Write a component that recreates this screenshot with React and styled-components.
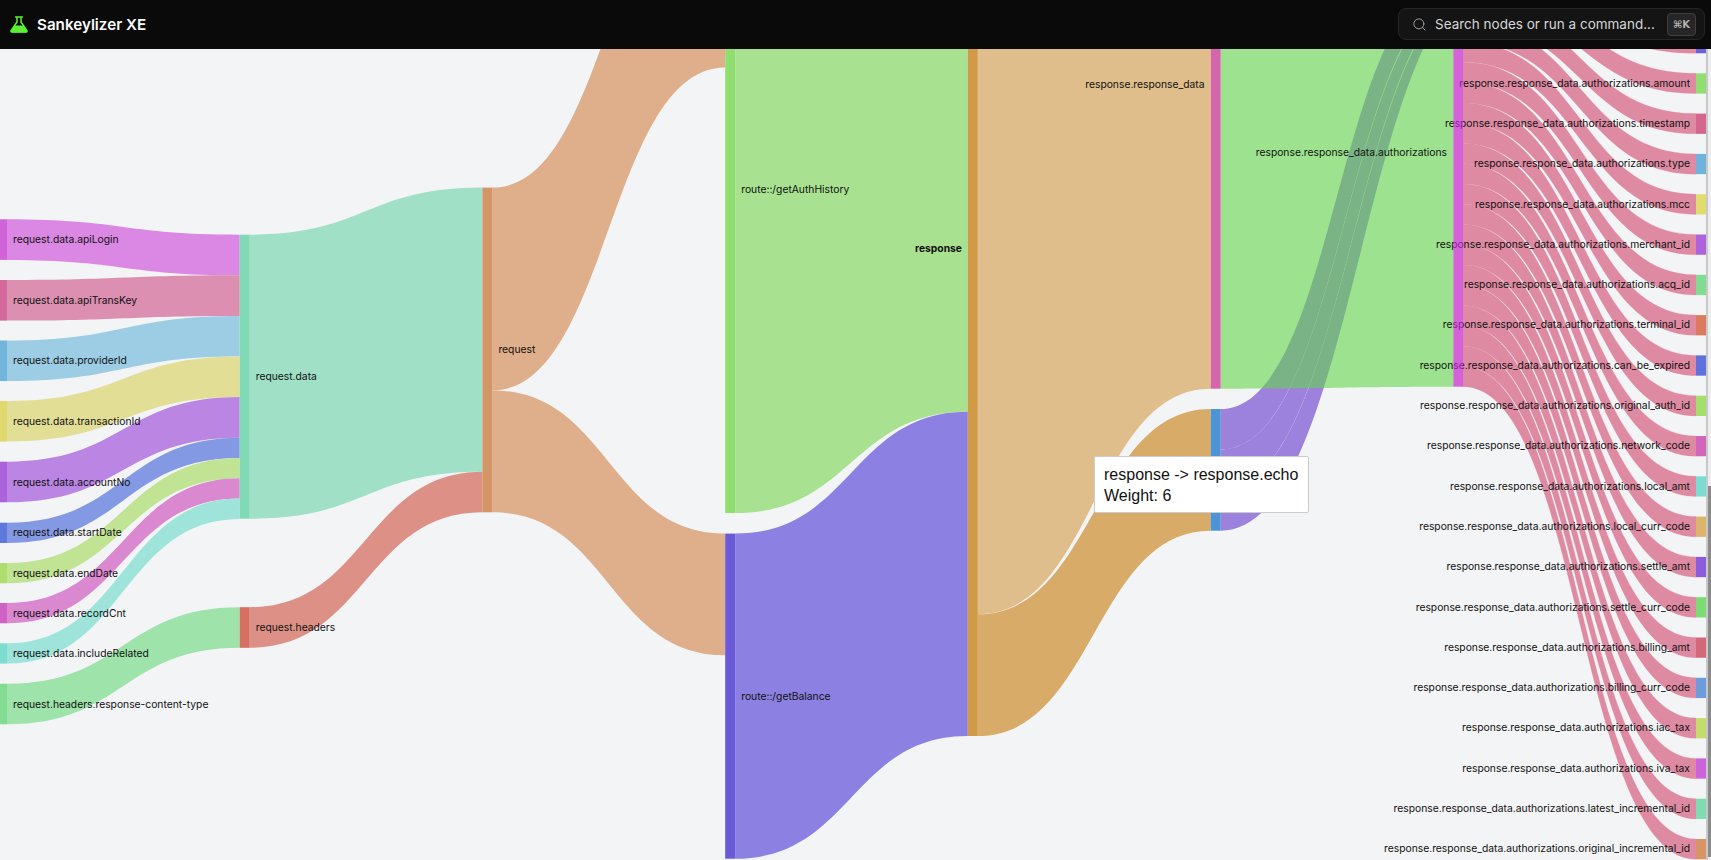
import React from 'react'
import styled, { createGlobalStyle } from 'styled-components'
import { Search } from 'lucide-react'

const GlobalStyle = createGlobalStyle`
html, body {
  margin: 0;
  padding: 0;
  height: 100%;
  overflow: hidden;
  background: #f3f4f6;
  font-family: Inter, "Liberation Sans", sans-serif;
}
`

const Page = styled.div`
display: flex;
flex-direction: column;
width: 100%;
height: 100vh;
`
const TopBar = styled.header`
display: flex;
align-items: center;
justify-content: space-between;
flex: 0 0 49px;
padding: 0 6px 1px 10px;
box-sizing: border-box;
background: #0a0a0a;
`
const Brand = styled.div`
display: flex;
align-items: center;
gap: 9px;
color: #fafafa;
font-size: 15.2px;
font-weight: 600;
`
const SearchBox = styled.div`
display: flex;
align-items: center;
width: 307px;
height: 32px;
padding: 0 8px 0 13px;
box-sizing: border-box;
background: #141414;
border: 1px solid #262626;
border-radius: 8px;
color: #d8d8d8;
font-size: 13.5px;
`
const SearchText = styled.span`
flex: 1;
margin-left: 8px;
white-space: nowrap;
`
const Kbd = styled.kbd`
display: flex;
align-items: center;
justify-content: center;
width: 27px;
height: 21px;
background: #262626;
border: 1px solid #404040;
border-radius: 4px;
color: #b0b0b0;
font-family: "DejaVu Sans", Inter, sans-serif;
font-size: 10px;
font-weight: 700;
`
const Body = styled.main`
display: flex;
flex: 1;
min-height: 0;
`
const Canvas = styled.div`
position: relative;
flex: 1;
overflow: hidden;
`
const Rail = styled.div`
position: relative;
flex: 0 0 5px;
background: linear-gradient(to right, #c8c8c8 0 2px, #ededed 2px);
`
const Thumb = styled.div`
position: absolute;
right: 0;
top: 437px;
bottom: 3px;
width: 3px;
background: #8a8a8a;
`
const Chart = styled.svg`
display: block;
width: 1706px;
height: 811px;
`
const Label = styled.text`
font-family: Inter, "Liberation Sans", sans-serif;
font-size: 10.3px;
font-weight: ${p => (p.$bold ? 700 : 400)};
fill: #111;
dominant-baseline: central;
`
const Tooltip = styled.div`
position: absolute;
left: 1094px;
top: 406.5px;
width: 215px;
height: 57px;
padding: 7px 9px;
box-sizing: border-box;
background: #fff;
border: 1px solid #ccc;
border-radius: 2px;
color: #111;
font-family: "Liberation Sans", Arial, sans-serif;
font-size: 16px;
line-height: 21px;
white-space: nowrap;
`

const COL = [-3, 239.7, 482.4, 725.2, 967.8, 1210.7, 1453.3, 1696]
const W = 10

// top and bottom edges of one band, each may end at its own x
function band(x0, s0, s1, xa, t0, xb, t1) {
  const ma = (x0 + xa) / 2
  const mb = (x0 + xb) / 2
  return `M${x0} ${s0}C${ma} ${s0} ${ma} ${t0} ${xa} ${t0}L${xb} ${t1}C${mb} ${t1} ${mb} ${s1} ${x0} ${s1}Z`
}
function link(a, s0, s1, b, t0, t1, color, opacity, seal) {
  return { d: band(COL[a] + W, s0, s1, COL[b], t0, COL[b], t1), color, opacity, seal }
}

const LEFT = [
  ['request.data.apiLogin', 219.3, 40.6, '#d063d8', '#da88e3'],
  ['request.data.apiTransKey', 280, 40.6, '#d4689a', '#dc8fb0'],
  ['request.data.providerId', 340.5, 40.6, '#72b5dc', '#9ccde4'],
  ['request.data.transactionId', 401, 40.6, '#dfd96f', '#e3de96'],
  ['request.data.accountNo', 461.7, 40.6, '#ac62da', '#ba85e3'],
  ['request.data.startDate', 522.7, 20.3, '#5e78dc', '#8499e3'],
  ['request.data.endDate', 563, 20.3, '#aede6f', '#c0e394'],
  ['request.data.recordCnt', 603, 20.3, '#d162c5', '#da88d0'],
  ['request.data.includeRelated', 643.3, 20.3, '#7ddcd0', '#9ee4da'],
]

const RIGHT = [
  ['', '#6a60dc'],
  ['amount', '#8fde6f'],
  ['timestamp', '#d4668f'],
  ['type', '#6fb2dc'],
  ['mcc', '#e0dc70'],
  ['merchant_id', '#b062dc'],
  ['acq_id', '#80dc90'],
  ['terminal_id', '#dc7a60'],
  ['can_be_expired', '#6070dc'],
  ['original_auth_id', '#a4de6c'],
  ['network_code', '#d266b8'],
  ['local_amt', '#7cdcd4'],
  ['local_curr_code', '#dcb46c'],
  ['settle_amt', '#8c5cdc'],
  ['settle_curr_code', '#7cdc74'],
  ['billing_amt', '#d46878'],
  ['billing_curr_code', '#6c9cdc'],
  ['iac_tax', '#c4dc6c'],
  ['iva_tax', '#cc62dc'],
  ['latest_incremental_id', '#80dcb0'],
  ['original_incremental_id', '#d89464'],
]

const PINK = '#dd8aa2'

const links = []
const nodes = []
const labels = []

// request.data inputs
let dataY = 234.7
LEFT.forEach(([name, y, h, node, col]) => {
  links.push(link(0, y, y + h, 1, dataY, dataY + h, col))
  nodes.push({ x: COL[0], y, h, color: node })
  labels.push({ text: name, x: 13, y: y + h / 2 })
  dataY += h
})
links.push(link(0, 683.7, 724.3, 1, 607.2, 647.8, '#9de3aa'))
nodes.push({ x: COL[0], y: 683.7, h: 40.6, color: '#82dd92' })
labels.push({ text: 'request.headers.response-content-type', x: 13, y: 704 })

links.push(link(1, 234.7, 518.7, 2, 187.6, 471.7, '#9fe0c6'))
links.push(link(1, 607.2, 647.8, 2, 471.7, 512.3, '#dd9186'))
nodes.push({ x: COL[1], y: 234.7, h: 284, color: '#80dab5' })
nodes.push({ x: COL[1], y: 607.2, h: 40.6, color: '#d77060' })
labels.push({ text: 'request.data', x: 255.7, y: 376.7 })
labels.push({ text: 'request.headers', x: 255.7, y: 627.5 })

links.push(link(2, 187.6, 390.4, 3, -135.4, 67.4, '#dfae8b'))
links.push(link(2, 390.4, 512.3, 3, 533.6, 655.3, '#dfae8b'))
nodes.push({ x: COL[2], y: 187.6, h: 324.7, color: '#d49566' })
labels.push({ text: 'request', x: 498.4, y: 349.5 })

links.push(link(3, -135.4, 513, 4, -237, 411.7, '#a8e290'))
links.push(link(3, 533.6, 858.7, 4, 411.7, 736, '#8c81e2'))
nodes.push({ x: COL[3], y: -135.4, h: 648.4, color: '#8fde6f' })
nodes.push({ x: COL[3], y: 533.6, h: 325.1, color: '#6a5ad8' })
labels.push({ text: 'route::/getAuthHistory', x: 741.2, y: 189 })
labels.push({ text: 'route::/getBalance', x: 741.2, y: 696 })

links.push(link(4, -237, 614.3, 5, -462, 388.7, '#dfbe8b'))
links.push(link(4, 614.3, 736, 5, 409, 530.7, '#d8ab68'))
nodes.push({ x: COL[4], y: -237, h: 973, color: '#d19a47' })
labels.push({ text: 'response', x: 962, y: 248, end: true, bold: true })

// response.echo children sit under the translucent green link
const echo = COL[5] + W
const PURPLE = '#9d82dd'
links.push({ d: band(echo, 409, 449.4, 1453.5, -17, 1470, -12), color: PURPLE })
links.push({ d: band(echo, 449.4, 490, 1470, -10, 1485, -16), color: PURPLE })
links.push({ d: band(echo, 490, 530.7, 1485, -14, 1500, -24), color: PURPLE })

links.push(link(5, -222, 388.7, 6, -83, 386.7, '#61d747', 0.59))
nodes.push({ x: COL[5], y: -222, h: 610.7, color: '#d566ac' })
nodes.push({ x: COL[5], y: 409, h: 121.7, color: '#4d94d4' })
labels.push({ text: 'response.response_data', x: 1204.5, y: 84, end: true })

labels.push({ text: 'response.response_data.authorizations', x: 1447, y: 152.5, end: true })

// authorizations fields
const extra = [-48, -7.5]
extra.forEach((y, i) => {
  const s = 366.4 - 20.27 * (22 - i)
  links.push(link(6, s, s + 20.27, 7, y, y + 20.27, PINK, undefined, true))
})
RIGHT.forEach(([name, node], i) => {
  const y = 33 + 40.3 * i
  const s = 366.4 - 20.27 * (20 - i)
  links.push(link(6, s, s + 20.27, 7, y, y + 20.27, PINK, undefined, true))
  nodes.push({ x: COL[7], y, h: 20.27, color: node })
  if (name) labels.push({ text: `response.response_data.authorizations.${name}`, x: 1690, y: y + 9.8, end: true })
})
nodes.push({ x: COL[6], y: -83, h: 469.7, color: '#c425cb', opacity: 0.7 })

export default function App() {
  return (
    <Page>
      <GlobalStyle />
      <TopBar>
        <Brand>
          <svg width="18" height="17" viewBox="0 0 18 17">
            <path d="M5.6 1H12.4M7 1V6L1.2 14.4Q0.4 16 2 16H16Q17.6 16 16.8 14.4L11 6V1" fill="none" stroke="#5cf032" strokeWidth="1.5" strokeLinecap="round" strokeLinejoin="round" />
            <path d="M4.4 9.4H13.6L17 14.6Q17.6 16.4 16 16.4H2Q0.4 16.4 1 14.6Z" fill="#5cf032" />
          </svg>
          Sankeylizer XE
        </Brand>
        <SearchBox>
          <Search size={15} strokeWidth={1.5} color="#a3a3a3" />
          <SearchText>Search nodes or run a command...</SearchText>
          <Kbd>⌘K</Kbd>
        </SearchBox>
      </TopBar>
      <Body>
        <Canvas>
          <Chart viewBox="0 49 1706 811">
            {links.map((l, i) => (
              <path
                key={i}
                d={l.d}
                fill={l.color}
                fillOpacity={l.opacity}
                stroke={l.seal ? l.color : undefined}
                strokeWidth={l.seal ? 0.25 : undefined}
              />
            ))}
            {labels.map(l => (
              <Label key={l.text} x={l.x} y={l.y - 0.5} textAnchor={l.end ? 'end' : 'start'} $bold={l.bold}>
                {l.text}
              </Label>
            ))}
            {nodes.map((n, i) => (
              <rect key={i} x={n.x} y={n.y} width={W} height={n.h} fill={n.color} fillOpacity={n.opacity} />
            ))}
          </Chart>
          <Tooltip>
            response -&gt; response.echo
            <br />
            Weight: 6
          </Tooltip>
        </Canvas>
        <Rail>
          <Thumb />
        </Rail>
      </Body>
    </Page>
  )
}
